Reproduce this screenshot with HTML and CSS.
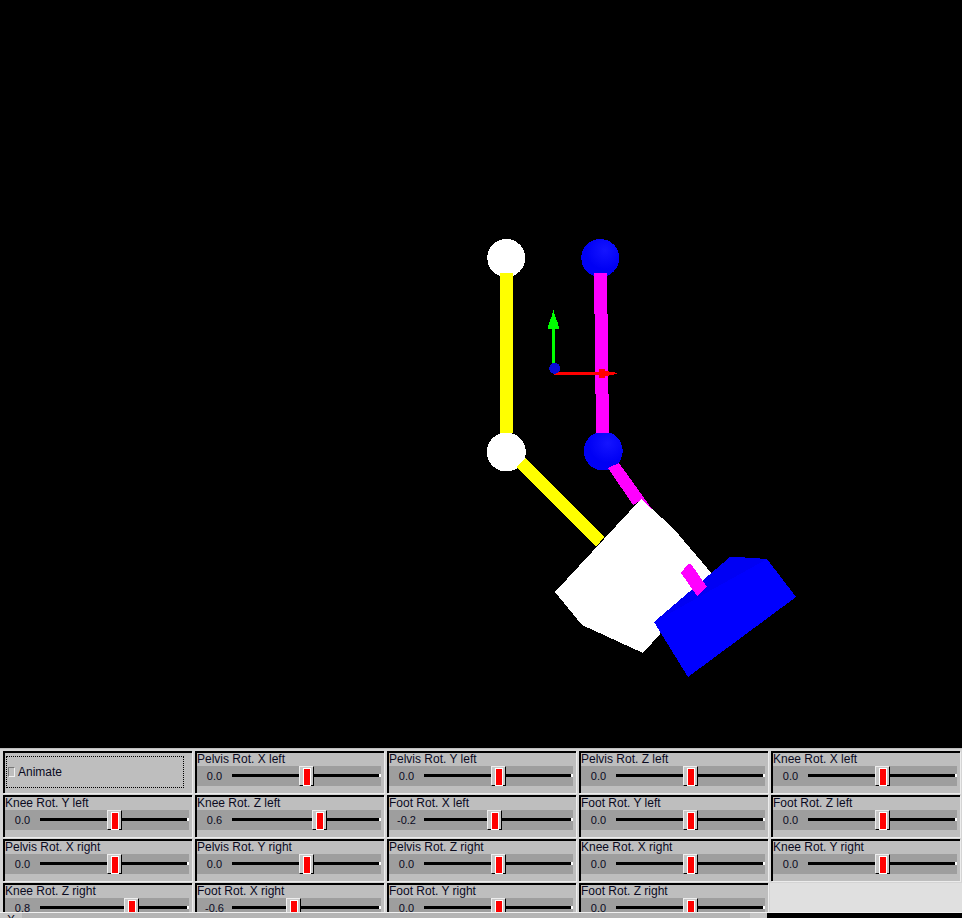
FILE: index.html
```html
<!DOCTYPE html>
<html lang="en">
<head>
  <meta charset="UTF-8">
  <meta name="viewport" content="width=device-width, initial-scale=1.0">
  <title>Leg Rig</title>
  <link rel="stylesheet" href="styles.css">
</head>
<body>
  <svg class="viewport" viewBox="0 0 962 748" shape-rendering="crispEdges">
    <defs>
      <radialGradient id="blueBall" cx="0.62" cy="0.3" r="0.5">
        <stop offset="0" stop-color="#1414ff"/>
        <stop offset="1" stop-color="#0000f4"/>
      </radialGradient>
    </defs>
    <!-- joints -->
    <circle class="white" cx="506.3" cy="258" r="19"/>
    <circle class="white" cx="506.3" cy="452" r="19.5"/>
    <circle fill="url(#blueBall)" cx="600.3" cy="258" r="19"/>
    <circle fill="url(#blueBall)" cx="603.2" cy="451" r="19.5"/>
    <!-- yellow leg -->
    <polygon class="yellow" points="500,273 513,273 513,433 500,433"/>
    <polygon class="yellow" points="516,467 525,458 604,537 596,547"/>
    <!-- magenta leg -->
    <polygon class="magenta" points="594,273 607,273 609,433 596,433"/>
    <polygon class="magenta" points="608,468 619,463 652,509 642,500 633,505"/>
    <!-- axes -->
    <rect class="green" x="552" y="328" width="3" height="36"/>
    <polygon class="green" points="553,310 554,310 555,317 556,317 557,322 558,322 559,329 548,329 549,322 550,322 551,317 552,317"/>
    <rect class="red" x="554" y="372" width="46" height="3"/>
    <polygon class="red" points="599,369 605,369 605,371 612,372 618,373 612,375 605,376 605,378 599,378"/>
    <circle class="axis-dot" cx="554.7" cy="368.3" r="5.5"/>
    <!-- foot -->
    <polygon class="white" points="641,499 673,528 713,575 643,653 582,625 555,592"/>
    <polygon class="blue" points="654,622 730,557 737,557 767,559 796,597 688,677"/>
    <polygon class="blue-top" points="654,622 730,557 737,557 767,559"/>
    <polygon class="magenta" points="688,564 691,564 707,587 697,596 681,573"/>
  </svg>

  <div class="panel">
    <div class="grid">
      <div class="cell">
        <label class="animate"><span class="check"></span>Animate</label>
      </div>
      <div class="cell">
        <div class="label">Pelvis Rot. X left</div>
        <div class="slider"><span class="value">0.0</span><div class="track"><div class="thumb" style="--v: 0"></div></div></div>
      </div>
      <div class="cell">
        <div class="label">Pelvis Rot. Y left</div>
        <div class="slider"><span class="value">0.0</span><div class="track"><div class="thumb" style="--v: 0"></div></div></div>
      </div>
      <div class="cell">
        <div class="label">Pelvis Rot. Z left</div>
        <div class="slider"><span class="value">0.0</span><div class="track"><div class="thumb" style="--v: 0"></div></div></div>
      </div>
      <div class="cell">
        <div class="label">Knee Rot. X left</div>
        <div class="slider"><span class="value">0.0</span><div class="track"><div class="thumb" style="--v: 0"></div></div></div>
      </div>

      <div class="cell">
        <div class="label">Knee Rot. Y left</div>
        <div class="slider"><span class="value">0.0</span><div class="track"><div class="thumb" style="--v: 0"></div></div></div>
      </div>
      <div class="cell">
        <div class="label">Knee Rot. Z left</div>
        <div class="slider"><span class="value">0.6</span><div class="track"><div class="thumb" style="--v: 0.6"></div></div></div>
      </div>
      <div class="cell">
        <div class="label">Foot Rot. X left</div>
        <div class="slider"><span class="value">-0.2</span><div class="track"><div class="thumb" style="--v: -0.2"></div></div></div>
      </div>
      <div class="cell">
        <div class="label">Foot Rot. Y left</div>
        <div class="slider"><span class="value">0.0</span><div class="track"><div class="thumb" style="--v: 0"></div></div></div>
      </div>
      <div class="cell">
        <div class="label">Foot Rot. Z left</div>
        <div class="slider"><span class="value">0.0</span><div class="track"><div class="thumb" style="--v: 0"></div></div></div>
      </div>

      <div class="cell">
        <div class="label">Pelvis Rot. X right</div>
        <div class="slider"><span class="value">0.0</span><div class="track"><div class="thumb" style="--v: 0"></div></div></div>
      </div>
      <div class="cell">
        <div class="label">Pelvis Rot. Y right</div>
        <div class="slider"><span class="value">0.0</span><div class="track"><div class="thumb" style="--v: 0"></div></div></div>
      </div>
      <div class="cell">
        <div class="label">Pelvis Rot. Z right</div>
        <div class="slider"><span class="value">0.0</span><div class="track"><div class="thumb" style="--v: 0"></div></div></div>
      </div>
      <div class="cell">
        <div class="label">Knee Rot. X right</div>
        <div class="slider"><span class="value">0.0</span><div class="track"><div class="thumb" style="--v: 0"></div></div></div>
      </div>
      <div class="cell">
        <div class="label">Knee Rot. Y right</div>
        <div class="slider"><span class="value">0.0</span><div class="track"><div class="thumb" style="--v: 0"></div></div></div>
      </div>

      <div class="cell">
        <div class="label">Knee Rot. Z right</div>
        <div class="slider"><span class="value">0.8</span><div class="track"><div class="thumb" style="--v: 0.8"></div></div></div>
      </div>
      <div class="cell">
        <div class="label">Foot Rot. X right</div>
        <div class="slider"><span class="value">-0.6</span><div class="track"><div class="thumb" style="--v: -0.6"></div></div></div>
      </div>
      <div class="cell">
        <div class="label">Foot Rot. Y right</div>
        <div class="slider"><span class="value">0.0</span><div class="track"><div class="thumb" style="--v: 0"></div></div></div>
      </div>
      <div class="cell">
        <div class="label">Foot Rot. Z right</div>
        <div class="slider"><span class="value">0.0</span><div class="track"><div class="thumb" style="--v: 0"></div></div></div>
      </div>
      <div class="empty"></div>
    </div>
    <div class="statusbar">
      <span class="tab">X</span>
      <span class="fill"></span>
      <span class="end"></span>
      <span class="canvas-edge"></span>
    </div>
  </div>
</body>
</html>
```

FILE: styles.css
```css
* { box-sizing: border-box; }
html, body { height: 100%; }
body {
  margin: 0;
  background: #000;
  overflow: hidden;
  font-family: "Liberation Sans", Arial, sans-serif;
  font-size: 12px;
  color: #0a0a1e;
}

/* 3d view */
.viewport { display: block; width: 962px; height: 748px; background: #000; }
.white { fill: #fff; }
.yellow { fill: #ff0; }
.magenta { fill: #f0f; }
.green { fill: #0f0; }
.red { fill: #f00; }
.blue { fill: #0000ff; }
.blue-top { fill: #0000f4; }
.axis-dot { fill: #0a0ad8; }

/* control panel */
.panel { height: 170px; background: #bcbcbc; display: flex; flex-direction: column; }
.grid {
  height: 165px;
  padding: 1px 0 0 2px;
  display: grid;
  grid-template-columns: repeat(5, 192px);
  grid-auto-rows: 44px;
  overflow: hidden;
  background: #d4d4d4;
  border-top: 1px solid #bcbcbc;
  border-bottom: 1px solid #f0f0f0;
}
.cell {
  margin: 1px 2px 1px 1px;
  border: 1px solid #000;
  border-width: 2px 0 0 2px;
  background: #bebebe;
  box-shadow: 1px 1px 0 #ececec;
  overflow: hidden;
}
.empty { background: #e0e0e0; height: 30px; margin: 1px 0 0 0; }

.label { height: 13px; line-height: 13px; white-space: nowrap; }
.slider {
  display: flex;
  align-items: center;
  height: 20px;
  margin-right: 3px;
  background: #9e9e9e;
}
.value { width: 35px; text-align: center; flex: none; font-size: 11px; margin-top: -1px; }
.track {
  position: relative;
  flex: 1;
  height: 3px;
  margin-top: -1px;
  background: #000;
  border-right: 2px solid #fff;
}
.thumb {
  position: absolute;
  left: calc(67px + var(--v) * 21.5px);
  top: -8px;
  width: 15px;
  height: 20px;
  background: #c8c8c8;
  border: 1px solid #eee;
  border-right-color: #000;
  border-bottom-color: #000;
}
.thumb::after {
  content: "";
  position: absolute;
  left: 3px;
  top: 1px;
  width: 6px;
  height: 16px;
  background: #f00;
  border: 1px solid #fff;
}

.animate {
  display: flex;
  align-items: center;
  height: 32px;
  margin: 3px 8px 0 1px;
  border: 1px dotted #000;
}
.check {
  width: 7px;
  height: 10px;
  margin: 0 3px 0 1px;
  flex: none;
  border: 1px solid #777;
  border-right-color: #f0f0f0;
  border-bottom-color: #f0f0f0;
}

/* clipped window strip under the panel */
.statusbar { height: 5px; display: flex; overflow: hidden; background: #b4b4b4; line-height: 14px; }
.tab { width: 22px; padding-left: 7px; background: #c4c4c4; }
.fill { flex: none; width: 728px; }
.end { flex: none; width: 17px; background: #c4c4c4; }
.canvas-edge { flex: 1; background: #000; }
```
